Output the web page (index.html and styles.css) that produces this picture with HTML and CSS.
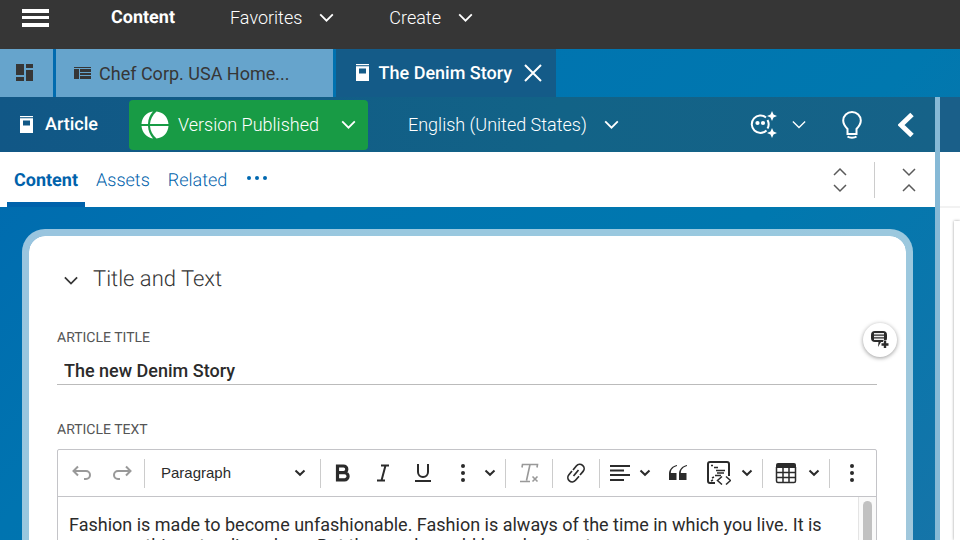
FILE: index.html
```
<!DOCTYPE html>
<html lang="en">
<head>
    <meta charset="UTF-8">
    <meta name="viewport" content="width=device-width, initial-scale=1.0">
    <title>The Denim Story</title>
    <link rel="stylesheet" href="styles.css">
</head>
<body>

<!-- icons used more than once -->
<svg width="0" height="0" class="sprite" aria-hidden="true">
    <symbol id="chevron" viewBox="0 0 16 10"><path d="M1 1.500l7 7 7-7"/></symbol>
    <symbol id="caret" viewBox="0 0 12 8"><path d="M1.500 1.500L6 5.800l4.500-4.300"/></symbol>
    <symbol id="article" viewBox="0 0 13 18">
        <path d="M0 0h13v1.200H0z"/>
        <path fill-rule="evenodd" d="M0 2.200h13V17H0zM3 4.500V9.500h7V4.500z"/>
    </symbol>
    <symbol id="dots" viewBox="0 0 6 20"><circle cx="3" cy="3" r="2"/><circle cx="3" cy="10" r="2"/><circle cx="3" cy="17" r="2"/></symbol>
</svg>

<header class="topbar">
    <button class="menu-btn" aria-label="Menu">
        <svg width="28" height="20" viewBox="0 0 28 20"><path fill="#fff" d="M0 1h27v4H0zM0 8h27v3H0zM0 15h27v4H0z"/></svg>
    </button>
    <nav class="main-nav">
        <a href="#" class="active">Content</a>
        <button>Favorites <svg class="chevron" width="15" height="9"><use href="#chevron"/></svg></button>
        <button>Create <svg class="chevron" width="15" height="9"><use href="#chevron"/></svg></button>
    </nav>
</header>

<div class="tabs">
    <button class="tab tab-home" aria-label="Dashboard">
        <svg width="18" height="18" viewBox="0 0 18 18"><path fill="#363636" d="M0 0h8v11H0zM10 0h7v4h-7zM10 6h7v11h-7zM0 13h8v4H0z"/></svg>
    </button>
    <button class="tab">
        <svg width="18" height="14" viewBox="0 0 18 14"><path fill="#363636" d="M0 1h17v1H0zM0 3h5v10H0zM6 3h11v3H6zM6 7h11v2H6zM6 10h11v3H6z"/></svg>
        Chef Corp. USA Home...
    </button>
    <div class="tab tab-current">
        <svg class="fill-white" width="13" height="18"><use href="#article"/></svg>
        <span>The Denim Story</span>
        <button aria-label="Close tab">
            <svg width="18" height="18" viewBox="0 0 18 18"><path d="M1 1l16 16M17 1L1 17" stroke="#fff" stroke-width="2"/></svg>
        </button>
    </div>
</div>

<div class="workarea">
    <main class="document">
        <div class="doc-bar">
            <svg class="fill-white" width="13" height="18"><use href="#article"/></svg>
            <span class="doc-type">Article</span>
            <button class="status">
                <svg width="28" height="28" viewBox="0 0 28 28">
                    <path fill="#fff" d="M12 .500C5.500 1.200 1 6 .500 13H7C7.200 8 9 3.500 12 .500zM.500 15C1 21.500 5.500 26.500 12 27.500 9 24 7.200 20 7 15zM15.500 .500C11.500 4 9.300 8.500 9 13h18.500C27 6 22 1 15.500 .500zM9 15c.300 5 2.500 9 6.500 12.500C22 27 27 22 27.500 15z"/>
                </svg>
                <span>Version Published</span>
                <svg class="chevron" width="15" height="9"><use href="#chevron"/></svg>
            </button>
            <button class="language">English (United States) <svg class="chevron" width="15" height="9"><use href="#chevron"/></svg></button>
            <div class="doc-tools">
                <button class="assistant" aria-label="Assistant">
                    <svg width="28" height="28" viewBox="0 0 28 28" fill="#fff">
                        <path d="M16 6.500A8.700 8.700 0 1 0 16.500 19.500M17.500 9A8.700 8.700 0 0 1 17.500 17.500" fill="none" stroke="#fff" stroke-width="2"/>
                        <circle cx="7.500" cy="12" r="2.100"/><circle cx="13" cy="12" r="2.100"/>
                        <path d="M22 0l1.500 3.500L27 5l-3.500 1.500L22 10l-1.500-3.500L17 5l3.500-1.500zM22 17l1.500 3.500L27 22l-3.500 1.500L22 27l-1.500-3.500L17 22l3.500-1.500z"/>
                    </svg>
                    <svg class="chevron thin" width="14" height="9"><use href="#chevron"/></svg>
                </button>
                <button aria-label="Suggestions">
                    <svg width="20" height="28" viewBox="0 0 20 28" fill="none" stroke="#fff" stroke-width="2">
                        <path d="M5.500 23v-5C3 15.500 1.200 13.500 1.200 9.600a8.800 8.600 0 0 1 17.600 0C18.800 13.500 17 15.500 14.500 18v5zM5.500 25.500c2 1.500 7 1.500 9 0"/>
                    </svg>
                </button>
                <button aria-label="Collapse">
                    <svg width="17" height="26" viewBox="0 0 17 26"><path d="M14 2.500L3 13l11 10.500" fill="none" stroke="#fff" stroke-width="5"/></svg>
                </button>
            </div>
        </div>

        <div class="form-tabs">
            <a href="#" class="active">Content</a>
            <a href="#">Assets</a>
            <a href="#">Related</a>
            <button class="more-tabs" aria-label="More tabs">
                <svg width="22" height="6" viewBox="0 0 22 6" fill="#0068b0"><circle cx="3" cy="3" r="2"/><circle cx="11" cy="3" r="2"/><circle cx="19" cy="3" r="2"/></svg>
            </button>
            <div class="expanders">
                <button aria-label="Expand all"><svg width="14" height="26" viewBox="0 0 14 26"><path d="M1 8l6-6 6 6M1 18l6 6 6-6"/></svg></button>
                <button aria-label="Collapse all"><svg width="14" height="26" viewBox="0 0 14 26"><path d="M1 2l6 6 6-6M1 24l6-6 6 6"/></svg></button>
            </div>
        </div>

        <div class="form-area">
            <section class="card">
                <h2><svg class="chevron" width="14" height="9"><use href="#chevron"/></svg>Title and Text</h2>

                <div class="field">
                    <label for="articleTitle">ARTICLE TITLE</label>
                    <input type="text" id="articleTitle" value="The new Denim Story">
                    <button class="comment-btn" aria-label="Add comment">
                        <svg width="20" height="20" viewBox="0 0 20 20">
                            <path fill="#2b2b2b" d="M5 1h8a4 4 0 0 1 4 4v3a4 4 0 0 1-4 4h-2l-3 5 .500-5H5a4 4 0 0 1-4-4V5a4 4 0 0 1 4-4z"/>
                            <path d="M4 3.700h10M4 6.500h10M4 9.300h10" stroke="#eee" stroke-width="1.600"/>
                            <path d="M15 10.500v8M11 14.500h8" stroke="#fff" stroke-width="4"/>
                            <path d="M15 11v7M11.500 14.500h7" stroke="#2b2b2b" stroke-width="2.400"/>
                        </svg>
                    </button>
                </div>

                <div class="field">
                    <label for="articleText">ARTICLE TEXT</label>
                    <div class="editor">
                        <div class="editor-bar">
                            <button class="muted" aria-label="Undo"><svg width="20" height="16" viewBox="0 0 20 16"><path d="M6 1.500L1.500 6 6 10.500M1.500 6H14a4 4 0 0 1 0 8h-2"/></svg></button>
                            <button class="muted" aria-label="Redo"><svg width="20" height="16" viewBox="0 0 20 16"><path d="M14 1.500L18.500 6 14 10.500M18.500 6H6a4 4 0 0 0 0 8h2"/></svg></button>
                            <span class="sep"></span>
                            <span class="style-select">
                                <select aria-label="Text style"><option>Paragraph</option></select>
                                <svg class="caret" width="12" height="8"><use href="#caret"/></svg>
                            </span>
                            <span class="sep"></span>
                            <button aria-label="Bold"><svg width="16" height="18" viewBox="0 0 16 18"><path stroke-width="3.200" d="M2.500 2h6a3.200 3.200 0 0 1 0 6.600h-6zM2.500 8.600h7a3.500 3.500 0 0 1 0 7.200h-7z"/></svg></button>
                            <button aria-label="Italic"><svg width="14" height="18" viewBox="0 0 14 18"><path d="M5 1.500h8M1 16.500h8M9.500 1.500l-4 15"/></svg></button>
                            <button aria-label="Underline"><svg width="18" height="20" viewBox="0 0 18 20"><path d="M4 1v8a5 5 0 0 0 10 0V1M1 18h16"/></svg></button>
                            <button aria-label="More formatting"><svg class="dots" width="6" height="20"><use href="#dots"/></svg></button>
                            <button class="drop" aria-label="Formatting options"><svg class="caret" width="12" height="8"><use href="#caret"/></svg></button>
                            <span class="sep"></span>
                            <button class="muted wide" aria-label="Remove format"><svg width="20" height="20" viewBox="0 0 20 20"><path stroke-width="1.600" d="M3 4.500L3.500 1.500h15L18 4.500M11 1.500L7.500 17.500M1 18.500h10M13.500 13.500l5 5M18.500 13.500l-5 5"/></svg></button>
                            <span class="sep"></span>
                            <button class="wide" aria-label="Link"><svg width="20" height="20" viewBox="0 0 20 20"><path stroke-width="1.700" d="M7.500 13l5-6M7 7l3.500-4.200a4.300 4.300 0 0 1 6.600 5.600L14 12M13 13.300l-3.500 4a4.300 4.300 0 0 1-6.600-5.600L6 8"/></svg></button>
                            <span class="sep"></span>
                            <button class="split" aria-label="Align left"><svg width="20" height="18" viewBox="0 0 20 18"><path d="M0 2h20M0 6.500h14M0 11h20M0 16h14"/></svg></button>
                            <button class="drop" aria-label="Alignment options"><svg class="caret" width="12" height="8"><use href="#caret"/></svg></button>
                            <button aria-label="Quote"><svg width="20" height="16" viewBox="0 0 20 16"><path class="solid" d="M9 1C5.500 2 3 4 2.800 8H8.500v7H1V9C1 4.500 4 1 9 0zM19 1c-3.500 1-6 3-6.200 7h5.700v7H11V9c0-4.500 3-8 8-9z"/></svg></button>
                            <button class="wide" aria-label="Code block"><svg width="24" height="24" viewBox="0 0 24 24"><path d="M8 22H3a2 2 0 0 1-2-2V3a2 2 0 0 1 2-2h17a2 2 0 0 1 2 2v12"/><path stroke-width="1.500" d="M4 4.500h2M7 6.500h4M9 9.500h9M10 12h7M8 14.500h6M5 17l2-1M4 20l2-1M15 15.500l-4.500 4 4.500 4M19 15.500l4.500 4-4.500 4"/></svg></button>
                            <button class="drop" aria-label="Code language"><svg class="caret" width="12" height="8"><use href="#caret"/></svg></button>
                            <span class="sep"></span>
                            <button class="wide" aria-label="Insert table"><svg width="22" height="22" viewBox="0 0 22 22"><path class="solid" d="M1 3a2 2 0 0 1 2-2h16a2 2 0 0 1 2 2v3H1z"/><path stroke-width="1.500" d="M1.500 5v14a1.500 1.500 0 0 0 1.500 1.500h16a1.500 1.500 0 0 0 1.500-1.500V5M1 10.500h20M1 15.500h20M8 5v15M14 5v15"/></svg></button>
                            <button class="drop" aria-label="Table options"><svg class="caret" width="12" height="8"><use href="#caret"/></svg></button>
                            <span class="sep"></span>
                            <button aria-label="Show more items"><svg class="dots" width="6" height="20"><use href="#dots"/></svg></button>
                        </div>
                        <div class="editor-body">
                            <textarea id="articleText">Fashion is made to become unfashionable. Fashion is always of the time in which you live. It is never anything standing alone. But the words could have been set.</textarea>
                            <div class="scrollbar"><div class="thumb"></div></div>
                        </div>
                    </div>
                </div>
            </section>
        </div>
    </main>

    <div class="splitter"></div>

    <aside class="preview">
        <div class="preview-bar"></div>
        <div class="preview-tools"></div>
        <div class="preview-page"></div>
    </aside>
</div>

</body>
</html>
```
FILE: styles.css
```
* {
    box-sizing: border-box;
}

body {
    margin: 0;
    height: 100vh;
    display: flex;
    flex-direction: column;
    overflow: hidden;
    font-family: Roboto, "Liberation Sans", sans-serif;
    font-size: 18px;
    text-rendering: geometricPrecision;
    color: #363636;
    background: linear-gradient(135deg, #0067ae 0%, #0074b0 35%, #0078af 65%, #1674a8 100%);
}

button {
    display: flex;
    align-items: center;
    padding: 0;
    border: none;
    background: none;
    font: inherit;
    color: inherit;
    cursor: pointer;
}

a {
    color: inherit;
    text-decoration: none;
}

svg {
    flex: none;
}

.sprite {
    position: absolute;
}

.chevron {
    fill: none;
    stroke: currentColor;
    stroke-width: 2;
}

.fill-white {
    fill: #fff;
}

/* top bar */
.topbar {
    flex: none;
    display: flex;
    align-items: center;
    height: 49px;
    padding: 0 22px 14px;
    background: #363636;
    color: #fff;
}

.main-nav {
    display: flex;
    align-items: center;
    gap: 55px;
    margin-left: 61px;
    font-weight: 300;
}

.main-nav .active {
    font-weight: bold;
}

.main-nav button {
    gap: 17px;
}

/* open documents */
.tabs {
    flex: none;
    display: flex;
    gap: 3px;
    height: 48px;
}

.tab {
    display: flex;
    align-items: center;
    gap: 7px;
    padding: 0 43px 0 18px;
    background: #66a4cc;
}

.tab-home {
    padding: 0 19px 0 16px;
}

.tab-current {
    gap: 10px;
    padding: 0 14px 0 20px;
    background: #145b88;
    color: #fff;
    font-weight: 500;
}

.tab-current button {
    margin-left: 2px;
}

/* document */
.workarea {
    flex: 1;
    min-height: 0;
    display: flex;
}

.document {
    flex: 1;
    min-width: 0;
    display: flex;
    flex-direction: column;
}

.doc-bar {
    flex: none;
    display: flex;
    align-items: center;
    height: 55px;
    padding: 0 20px;
    background: linear-gradient(90deg, #115786, #126387 60%, #166288);
    color: #fff;
}

.doc-type {
    margin: 0 31px 0 12px;
    font-weight: 500;
}

.status {
    height: 50px;
    padding: 0 12px;
    border-radius: 4px;
    background: #189b45;
    font-weight: 300;
}

.status span {
    margin: 0 22px 0 9px;
}

.language {
    gap: 17px;
    margin-left: 40px;
    font-weight: 300;
}

.doc-tools {
    display: flex;
    align-items: center;
    gap: 36px;
    margin-left: auto;
}

.assistant {
    gap: 14px;
}

.thin {
    stroke-width: 1.5;
}

.form-tabs {
    flex: none;
    display: flex;
    gap: 4px;
    height: 55px;
    padding: 0 19px 0 7px;
    background: #fff;
    color: #0062ab;
    font-weight: 300;
}

.form-tabs a {
    padding: 18px 7px 0;
}

.form-tabs .active {
    border-bottom: 5px solid #0062ab;
    font-weight: bold;
}

.more-tabs {
    padding: 0 8px 4px;
}

.expanders {
    display: flex;
    align-items: center;
    margin-left: auto;
    fill: none;
    stroke: #5a5a5a;
    stroke-width: 1.5;
}

.expanders button {
    height: 36px;
}

.expanders button + button {
    margin-left: 27px;
    padding-left: 27px;
    border-left: 1px solid #ccc;
}

.form-area {
    flex: 1;
    min-height: 0;
    padding: 22px 22px 0;
}

.card {
    padding: 29px 29px 28px 28px;
    border: 7px solid rgba(255, 255, 255, 0.6);
    border-radius: 23px;
    background: #fff;
    background-clip: padding-box;
}

.card h2 {
    display: flex;
    align-items: center;
    gap: 15px;
    margin: 0 0 34px;
    padding-left: 7px;
    font-size: 22px;
    font-weight: 300;
    line-height: 30px;
}

.field {
    position: relative;
    margin-bottom: 36px;
}

.field label {
    display: block;
    margin-bottom: 10px;
    font-size: 14px;
    line-height: 18px;
    color: #555;
}

.field input {
    width: 100%;
    height: 28px;
    padding: 0 7px;
    border: none;
    border-bottom: 1px solid #bbb;
    font: 500 18px Roboto, sans-serif;
    color: #2b2b2b;
}

/* floats over the card edge, beside the field */
.comment-btn {
    position: absolute;
    top: -6px;
    right: -20px;
    justify-content: center;
    width: 34px;
    height: 34px;
    border-radius: 50%;
    background: #fff;
    box-shadow: 0 1px 4px rgba(0, 0, 0, 0.4);
}

/* rich text editor */
.editor {
    border: 1px solid #c4c4c8;
    border-radius: 2px;
}

.editor-bar {
    display: flex;
    align-items: center;
    height: 47px;
    padding: 0 4px;
    border-bottom: 1px solid #c4c4c8;
    fill: none;
    stroke: #2b2b2b;
    stroke-width: 2;
}

.editor-bar button {
    flex: none;
    justify-content: center;
    width: 40px;
    height: 40px;
}

.editor-bar .wide {
    width: 42px;
}

.editor-bar .split {
    width: 36px;
}

.editor-bar .drop {
    justify-content: flex-start;
    width: 20px;
    padding-left: 1px;
}

.muted {
    stroke: #999;
}

.sep {
    flex: none;
    width: 1px;
    height: 29px;
    margin: 0 2px;
    background: #ccc;
}

.solid,
.dots {
    fill: #2b2b2b;
    stroke: none;
}

.style-select {
    display: grid;
    align-items: center;
    width: 171px;
}

.style-select select,
.style-select svg {
    grid-area: 1 / 1;
}

.style-select select {
    height: 40px;
    padding: 0 14px 2px;
    border: none;
    background: none;
    appearance: none;
    font: 15px "Liberation Sans", sans-serif;
    color: #2b2b2b;
}

.style-select svg {
    justify-self: end;
    margin-right: 12px;
    pointer-events: none;
}

.editor-body {
    display: flex;
}

.editor-body textarea {
    flex: 1;
    height: 90px;
    padding: 17px 11px 0;
    border: none;
    resize: none;
    overflow: hidden;
    font: 18px/21px Roboto, sans-serif;
    color: #2b2b2b;
}

.scrollbar {
    width: 18px;
    padding: 4px 4px 0;
    border-left: 1px solid #e4e4e4;
    background: #fafafa;
}

.thumb {
    height: 60px;
    border-radius: 5px;
    background: #c1c1c1;
}

/* preview pane */
.splitter {
    width: 5px;
    background: #86b9d6;
}

.preview {
    display: flex;
    flex-direction: column;
    width: 20px;
    background: #fff;
}

.preview-bar {
    height: 55px;
    background: #1a5f89;
}

.preview-tools {
    height: 56px;
    border-bottom: 2px solid #f2f2f2;
}

.preview-page {
    flex: 1;
    margin: 13px 0 0 14px;
    box-shadow: 0 0 3px rgba(0, 0, 0, 0.4);
}
```
